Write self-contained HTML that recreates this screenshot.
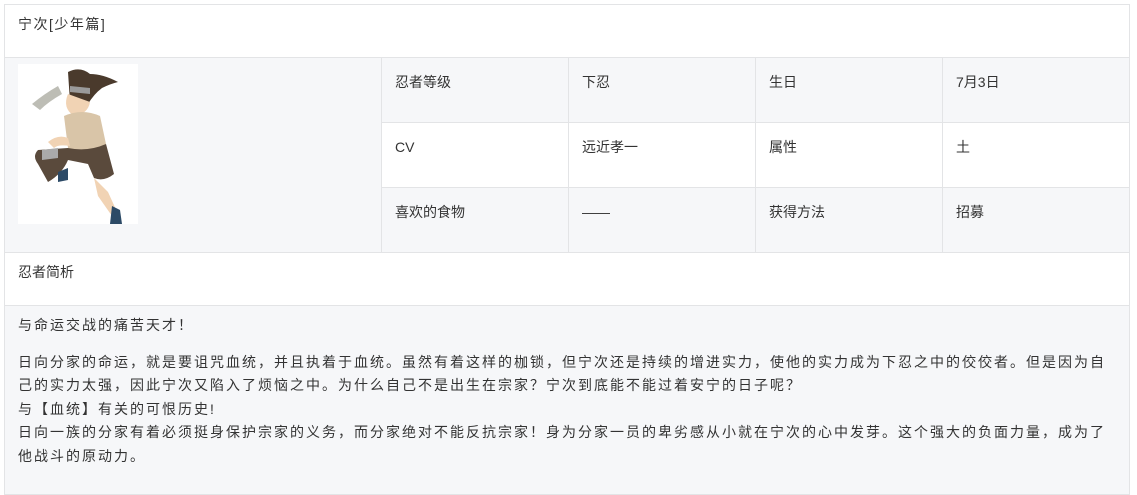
<!DOCTYPE html>
<html><head><meta charset="utf-8"><style>
*{margin:0;padding:0;box-sizing:border-box}
body{width:1137px;height:481px;background:#fff;font-family:"Liberation Sans","Noto Sans CJK SC",sans-serif;font-size:14px;color:#333;overflow:hidden;position:relative}
.c{position:absolute;border:1px solid #e3e4e6;padding:14px 13px;line-height:20px}
.g{background:#f6f7f9}
p{line-height:23.5px;white-space:nowrap;letter-spacing:2px}
</style></head><body>
<div class="c" style="left:4px;top:4px;width:1126px;height:54px;padding-top:9px;letter-spacing:1.5px">宁次[少年篇]</div>
<div class="c g" style="left:4px;top:57px;width:378px;height:196px"></div>
<svg style="position:absolute;left:18px;top:64px" width="120" height="160" viewBox="0 0 120 160">
<rect width="120" height="160" fill="#fff"/>
<path d="M50 8 Q62 2 72 10 Q85 10 100 18 Q92 20 84 24 Q76 30 70 40 L52 38 Z" fill="#4a3a2c"/>
<path d="M14 40 Q26 30 40 22 L44 30 Q30 38 22 46 Z" fill="#bdbdb5"/>
<path d="M50 30 Q44 44 56 52 Q70 50 72 38 Z" fill="#f1d3b4"/>
<path d="M52 22 L72 24 L72 30 L52 28 Z" fill="#9a9a9a"/>
<path d="M46 52 Q64 44 82 52 L88 80 Q70 90 50 84 Z" fill="#d9c5a8"/>
<path d="M30 78 Q40 70 50 74 L52 82 Q40 80 36 84 Z" fill="#f1d3b4"/>
<path d="M30 118 L20 100 Q14 92 20 86 L50 84 Q70 88 88 80 L96 110 Q86 118 76 114 L70 100 Q60 98 50 96 Q44 110 30 118 Z" fill="#5a4a3c"/>
<path d="M24 86 L40 84 L40 94 L24 96 Z" fill="#aaa"/>
<path d="M76 114 L90 128 L100 150 L94 152 L80 132 Z" fill="#f1d3b4"/>
<path d="M94 142 L102 146 L104 160 L92 160 Z" fill="#2c4a66"/>
<path d="M40 108 L50 104 L50 116 L40 118 Z" fill="#2c4a66"/>
</svg>
<div class="c g" style="left:381px;top:57px;width:188px;height:66px">忍者等级</div>
<div class="c g" style="left:568px;top:57px;width:188px;height:66px">下忍</div>
<div class="c g" style="left:755px;top:57px;width:188px;height:66px">生日</div>
<div class="c g" style="left:942px;top:57px;width:188px;height:66px">7月3日</div>
<div class="c" style="left:381px;top:122px;width:188px;height:66px">CV</div>
<div class="c" style="left:568px;top:122px;width:188px;height:66px">远近孝一</div>
<div class="c" style="left:755px;top:122px;width:188px;height:66px">属性</div>
<div class="c" style="left:942px;top:122px;width:188px;height:66px">土</div>
<div class="c g" style="left:381px;top:187px;width:188px;height:66px">喜欢的食物</div>
<div class="c g" style="left:568px;top:187px;width:188px;height:66px">——</div>
<div class="c g" style="left:755px;top:187px;width:188px;height:66px">获得方法</div>
<div class="c g" style="left:942px;top:187px;width:188px;height:66px">招募</div>
<div class="c" style="left:4px;top:252px;width:1126px;height:54px;padding-top:9px">忍者简析</div>
<div class="c g" style="left:4px;top:305px;width:1126px;height:190px;padding:8px 13px">
<p>与命运交战的痛苦天才！</p>
<p style="margin-top:13px">日向分家的命运，就是要诅咒血统，并且执着于血统。虽然有着这样的枷锁，但宁次还是持续的增进实力，使他的实力成为下忍之中的佼佼者。但是因为自<br>己的实力太强，因此宁次又陷入了烦恼之中。为什么自己不是出生在宗家？宁次到底能不能过着安宁的日子呢？<br>与【血统】有关的可恨历史!<br>日向一族的分家有着必须挺身保护宗家的义务，而分家绝对不能反抗宗家！身为分家一员的卑劣感从小就在宁次的心中发芽。这个强大的负面力量，成为了<br>他战斗的原动力。</p>
</div>
</body></html>
